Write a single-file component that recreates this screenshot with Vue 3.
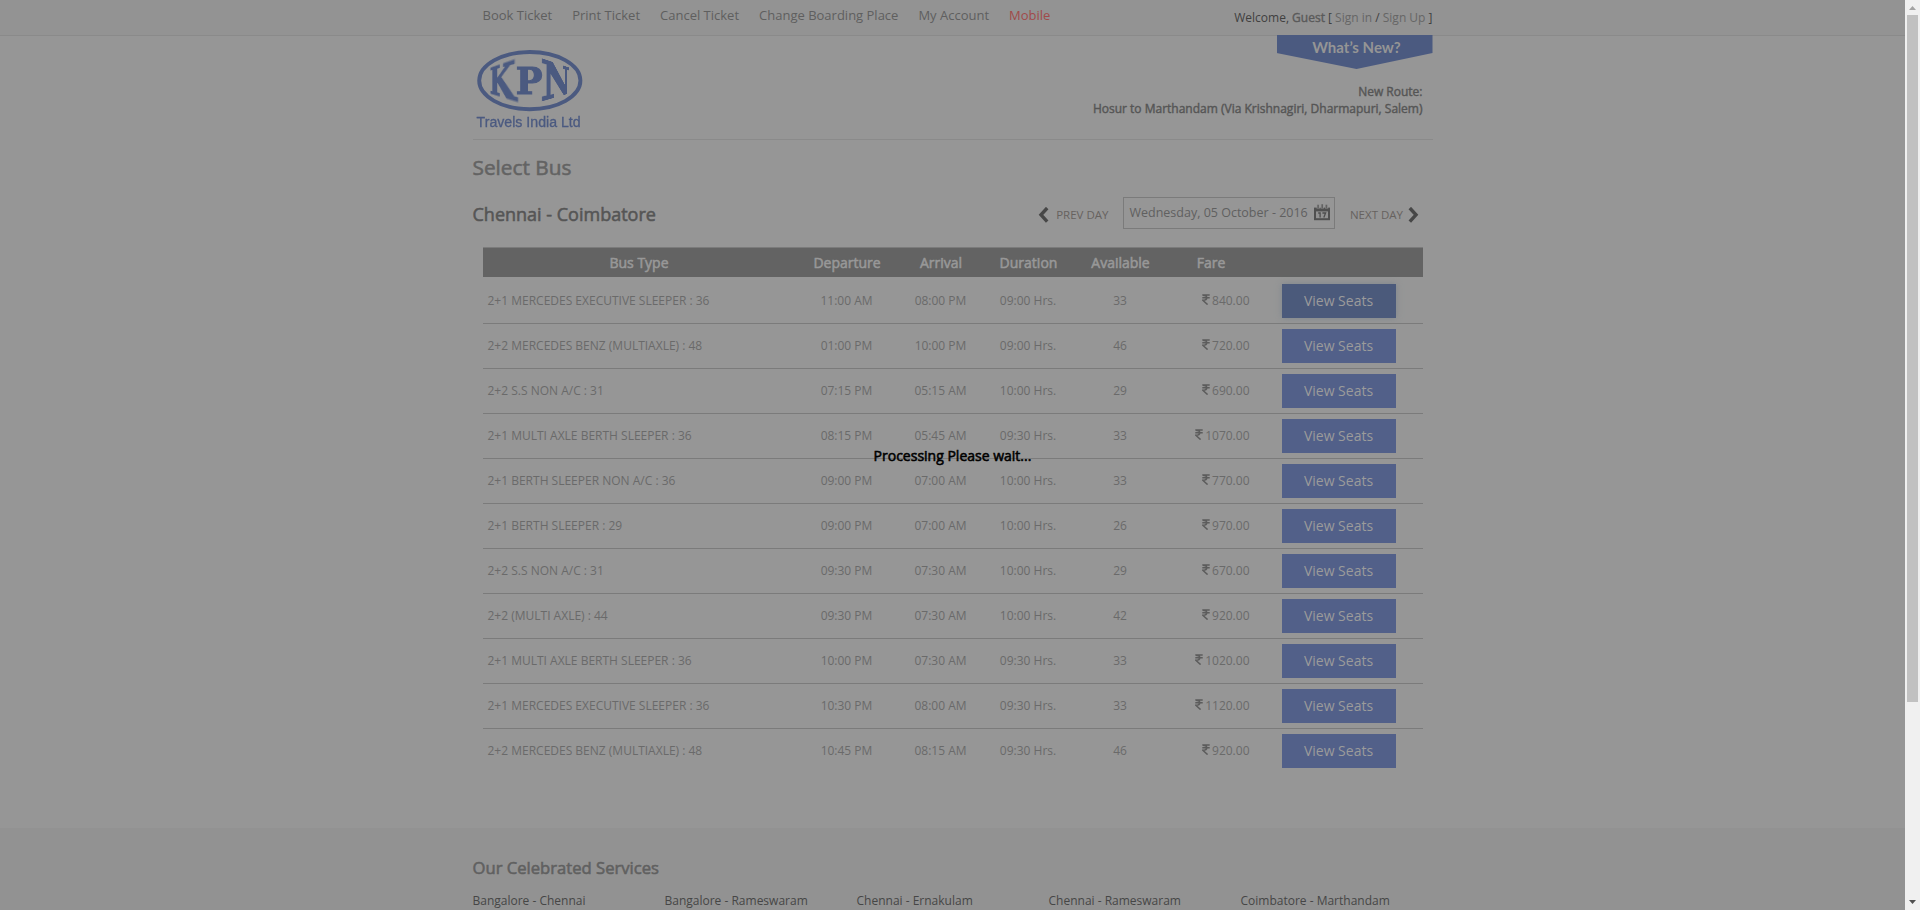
<script setup>
const nav = ['Book Ticket', 'Print Ticket', 'Cancel Ticket', 'Change Boarding Place', 'My Account', 'Mobile']
const heads = ['Bus Type', 'Departure', 'Arrival', 'Duration', 'Available', 'Fare', '']
const buses = [
  ['2+1 MERCEDES EXECUTIVE SLEEPER : 36', '11:00 AM', '08:00 PM', '09:00 Hrs.', '33', '840.00'],
  ['2+2 MERCEDES BENZ (MULTIAXLE) : 48', '01:00 PM', '10:00 PM', '09:00 Hrs.', '46', '720.00'],
  ['2+2 S.S NON A/C : 31', '07:15 PM', '05:15 AM', '10:00 Hrs.', '29', '690.00'],
  ['2+1 MULTI AXLE BERTH SLEEPER : 36', '08:15 PM', '05:45 AM', '09:30 Hrs.', '33', '1070.00'],
  ['2+1 BERTH SLEEPER NON A/C : 36', '09:00 PM', '07:00 AM', '10:00 Hrs.', '33', '770.00'],
  ['2+1 BERTH SLEEPER : 29', '09:00 PM', '07:00 AM', '10:00 Hrs.', '26', '970.00'],
  ['2+2 S.S NON A/C : 31', '09:30 PM', '07:30 AM', '10:00 Hrs.', '29', '670.00'],
  ['2+2 (MULTI AXLE) : 44', '09:30 PM', '07:30 AM', '10:00 Hrs.', '42', '920.00'],
  ['2+1 MULTI AXLE BERTH SLEEPER : 36', '10:00 PM', '07:30 AM', '09:30 Hrs.', '33', '1020.00'],
  ['2+1 MERCEDES EXECUTIVE SLEEPER : 36', '10:30 PM', '08:00 AM', '09:30 Hrs.', '33', '1120.00'],
  ['2+2 MERCEDES BENZ (MULTIAXLE) : 48', '10:45 PM', '08:15 AM', '09:30 Hrs.', '46', '920.00'],
]
const services = ['Bangalore - Chennai', 'Bangalore - Rameswaram', 'Chennai - Ernakulam', 'Chennai - Rameswaram', 'Coimbatore - Marthandam']
</script>

<template>
  <div class="window">
    <div class="page">
      <div class="topbar">
        <div class="wrap top-inner">
          <nav class="nav">
            <a v-for="n in nav" :key="n" :class="{ mobile: n === 'Mobile' }">{{ n }}</a>
          </nav>
          <div class="welcome">Welcome, <b class="fb guest">Guest</b> [ <a>Sign in</a> / <a>Sign Up</a> ]</div>
        </div>
      </div>

      <header class="wrap header">
        <div class="logo">
          <svg class="oval" width="106" height="62" viewBox="0 0 106 62">
            <ellipse cx="52.8" cy="30.6" rx="50.6" ry="28.6" fill="none" stroke="#4b5a80" stroke-width="3.9" />
          </svg>
          <span class="letter k">K</span>
          <span class="letter p">P</span>
          <span class="letter n">N</span>
          <svg class="tagline" width="110" height="18" viewBox="0 0 110 18">
            <text x="0.6" y="13" textLength="104" lengthAdjust="spacingAndGlyphs">Travels India Ltd</text>
          </svg>
        </div>
        <div class="news">
          <div class="ribbon">What’s New?</div>
          <p class="fb route">New Route:<br />Hosur to Marthandam (Via Krishnagiri, Dharmapuri, Salem)</p>
        </div>
      </header>

      <main class="wrap main">
        <h1 class="fb">Select Bus</h1>
        <div class="journey">
          <h2 class="fb">Chennai - Coimbatore</h2>
          <div class="days">
            <svg class="chev" width="11" height="16" viewBox="0 0 11 16"><path d="M9.2 1 L3 7.8 L9.2 14.6" /></svg>
            <span class="day prev">PREV DAY</span>
            <div class="date">
              <span>Wednesday, 05 October - 2016</span>
              <svg width="16" height="17" viewBox="0 0 16 17">
                <path d="M0 3.6h16v12.6H0z" fill="#505050" />
                <path d="M2 7.4h12v6.8H2z" fill="#929292" />
                <path d="M2.6 0.6h3.2v4h-3.2zM6.6 0h3.2v4.4h-3.2zM11 0.6h3.2v4h-3.2z" fill="#929292" />
                <path d="M3.3 0.8h1.6v3.4h-1.6zM7.4 0.2h1.6v4h-1.6zM11.6 0.8h1.6v3.4h-1.6z" fill="#626262" />
                <path d="M4.2 9h1.9v4.4M8.4 9h3.2l-1.8 4.4" fill="none" stroke="#4e4e4e" stroke-width="1.3" />
              </svg>
            </div>
            <span class="day">NEXT DAY</span>
            <svg class="chev next" width="11" height="16" viewBox="0 0 11 16"><path d="M1.8 1 L8 7.8 L1.8 14.6" /></svg>
          </div>
        </div>

        <div class="table">
          <div class="row head">
            <div v-for="h in heads" :key="h" class="fb">{{ h }}</div>
          </div>
          <div v-for="(b, i) in buses" :key="i" class="row body">
            <div class="type">{{ b[0] }}</div>
            <div>{{ b[1] }}</div>
            <div>{{ b[2] }}</div>
            <div>{{ b[3] }}</div>
            <div>{{ b[4] }}</div>
            <div class="fare">
              <svg width="8" height="11" viewBox="0 0 8 11"><path d="M0.3 1h7.4M0.3 3.7h7.4M1 1.2c5 0 5 5 0 5h-.3L5.6 10.6" /></svg>{{ b[5] }}
            </div>
            <div class="action"><button :class="{ active: i === 0 }">View Seats</button></div>
          </div>
        </div>
      </main>

      <footer class="footer">
        <div class="wrap">
          <h3 class="fb">Our Celebrated Services</h3>
          <div class="services"><a v-for="s in services" :key="s">{{ s }}</a></div>
        </div>
      </footer>

      <div class="fb processing">Processing Please wait...</div>
    </div>

    <div class="scrollbar">
      <svg width="7" height="4" viewBox="0 0 7 4"><path d="M0 4L3.5 0L7 4z" fill="#a3a3a3" /></svg>
      <div class="thumb"></div>
      <svg class="down" width="7" height="4" viewBox="0 0 7 4"><path d="M0 0h7L3.5 4z" fill="#505050" /></svg>
    </div>
  </div>
</template>

<style>
html, body { margin: 0; overflow: hidden; background: #969696; }
</style>

<style scoped>
* { box-sizing: border-box; }
.window { display: flex; width: 1920px; height: 910px; overflow: hidden; font-family: "Open Sans", "Noto Sans", sans-serif; font-size: 12px; color: #6a6a6a; background: #969696; }
.page { position: relative; width: 1905px; height: 910px; overflow: hidden; }
.wrap { width: 960px; margin: 0 auto; }
h1, h2, h3, p { margin: 0; font-weight: 400; white-space: nowrap; }
.fb { font-weight: 400; -webkit-text-stroke: 0.55px currentColor; }

.topbar { height: 36px; background: #939393; border-bottom: 1px solid #8a8a8a; }
.top-inner { display: flex; justify-content: space-between; height: 35px; }
.nav { display: flex; gap: 20px; padding: 6px 0 0 10px; font-size: 13px; line-height: 18px; color: #5f5f5f; white-space: nowrap; }
.mobile { color: #a14a4a; }
.welcome { padding-top: 9px; line-height: 17px; color: #404040; white-space: nowrap; }
.welcome a { color: #666; }
.guest { color: #5a5a5a; -webkit-text-stroke-width: 0.4px; }

.header { display: flex; justify-content: space-between; height: 104px; border-bottom: 1px solid #8a8a8a; }
.logo { position: relative; width: 120px; height: 103px; color: #4b5a80; }
.oval { position: absolute; left: 4px; top: 14px; }
.letter { position: absolute; font-family: "DejaVu Serif", serif; font-weight: 700; line-height: 1; transform-origin: 50% 50%; -webkit-text-stroke: 1.1px #4b5a80; }
.k { left: 8.5px; top: 24px; font-size: 43px; transform: perspective(40px) scaleX(0.77) rotateY(-32deg); }
.p { left: 42.5px; top: 26.3px; font-size: 38px; transform: scaleX(0.94); }
.n { left: 66px; top: 24px; font-size: 43px; transform: perspective(40px) scaleX(0.81) rotateY(32deg); }
.tagline { position: absolute; left: 3px; top: 78px; }
.tagline text { font-family: "Liberation Sans", Arial, sans-serif; font-size: 14px; fill: #4b5a80; stroke: #4b5a80; stroke-width: 0.3px; }
.news { display: flex; flex-direction: column; align-items: flex-end; margin-top: -1px; }
.ribbon { width: 156px; height: 34px; background: #4b5a80; clip-path: polygon(0 0, 100% 0, 100% 53%, 51.3% 100%, 0 53%); font-family: Lato, sans-serif; font-weight: 700; font-size: 15px; line-height: 24px; text-align: center; color: #959595; padding-left: 4px; }
.route { margin: 14px 10px 0 0; text-align: right; line-height: 17px; color: #555; -webkit-text-stroke-width: 0.4px; }

.main { height: 688px; }
h1 { padding-top: 13px; font-size: 20.8px; line-height: 28px; color: #636363; }
.journey { display: flex; justify-content: space-between; height: 66px; padding-top: 16px; }
h2 { padding-top: 5px; font-size: 18px; line-height: 24px; color: #555; }
.days { display: flex; align-items: flex-start; padding-right: 14px; }
.chev { margin-top: 10px; }
.chev path { fill: none; stroke: #474747; stroke-width: 3.4; }
.day { margin-top: 10px; font-size: 11.5px; line-height: 16px; color: #66625f; white-space: nowrap; }
.prev { margin: 10px 15px 0 7px; }
.date { display: flex; align-items: center; justify-content: space-between; width: 212px; height: 32px; margin-right: 14.5px; padding: 0 4px 1px 5px; border: 1px solid #7b7b7b; font-size: 12.5px; color: #606060; white-space: nowrap; }
.next { margin-left: 4.5px; }

.table { width: 940px; margin: 0 auto; }
.row { display: grid; grid-template-columns: 313px 103px 85px 90px 94px 87px 168px; align-items: center; text-align: center; white-space: nowrap; }
.head { height: 30px; margin-bottom: 2px; border-top: 1px solid #7b7b7b; background: #636363; color: #989898; font-size: 14px; line-height: 18px; }
.body { height: 45px; border-bottom: 1px solid #7b7b7b; }
.body > div { padding: 0 1px 1px 0; }
.body:last-child { border-bottom-color: transparent; }
.body > .type { padding-left: 5px; text-align: left; }
.body > .fare { text-align: right; padding-right: 5px; }
.body > .action { padding: 0; }
.fare svg { margin-right: 2px; vertical-align: 0; }
.fare path { fill: none; stroke: #5c5c5c; stroke-width: 1.5; }
button { display: block; width: 114px; height: 34px; margin: 0 auto; padding: 0; border: 0; background: #526089; color: #9b9b9b; font: 14px/34px "Open Sans", sans-serif; }
.active { background: #4b5a7b; box-shadow: 0 0 6px #7d868e; }

.footer { height: 90px; background: #929292; }
h3 { padding-top: 27px; font-size: 16.64px; line-height: 26px; color: #606060; }
.services { display: grid; grid-template-columns: repeat(5, 192px); margin-top: 11px; line-height: 17px; color: #464646; white-space: nowrap; }

.processing { position: absolute; left: 0; right: 0; top: 446px; text-align: center; font-size: 14px; line-height: 20px; color: #000; }

.scrollbar { display: flex; flex-direction: column; align-items: center; width: 15px; height: 910px; padding-top: 6px; background: #f0f0f0; }
.thumb { width: 11px; height: 687px; margin-top: 5px; background: #c1c1c1; }
.down { margin-top: 198px; }
</style>
